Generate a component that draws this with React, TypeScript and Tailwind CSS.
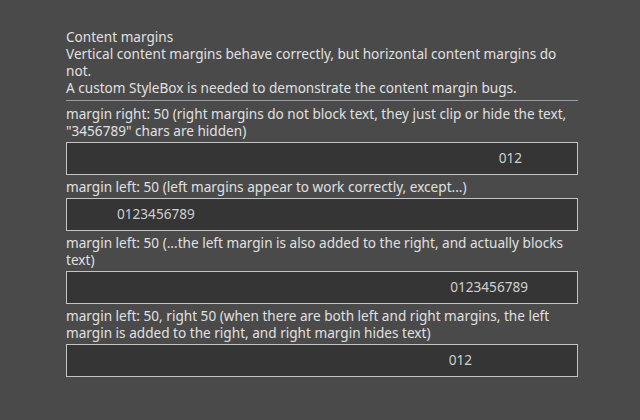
export default function App() {
  const label = "text-[13.6px] leading-[17px] text-[#e0e0e0]";
  const box = "flex h-[33px] items-center border border-[#c4c4c4] bg-[#353535] text-[13.6px] text-[#cfcfcf]";
  return (
    <div
      className="h-[420px] w-[640px] overflow-hidden bg-[#4a4a4a] px-[66px] pt-[28px]"
      style={{ fontFamily: '"Noto Sans", "Open Sans", sans-serif' }}
    >
      <div className="flex w-[512px] flex-col gap-[3px]">
        <div className={label}>
          <p>Content margins</p>
          <p>Vertical content margins behave correctly, but horizontal content margins do not.</p>
          <p>A custom StyleBox is needed to demonstrate the content margin bugs.</p>
        </div>
        <div className="flex h-[3px] items-center">
          <div className="h-px w-full bg-[#9a9ea4]" />
        </div>
        <p className={label}>
          margin right: 50 (right margins do not block text, they just clip or hide the text, "3456789" chars are hidden)
        </p>
        <div className={`${box} justify-end pr-[55px]`}>012</div>
        <p className={label}>margin left: 50 (left margins appear to work correctly, except...)</p>
        <div className={`${box} pl-[50px]`}>0123456789</div>
        <p className={label}>
          margin left: 50 (...the left margin is also added to the right, and actually blocks text)
        </p>
        <div className={`${box} justify-end pr-[49px]`}>0123456789</div>
        <p className={label}>
          margin left: 50, right 50 (when there are both left and right margins, the left margin is added to the right, and right margin hides text)
        </p>
        <div className={`${box} justify-end pr-[105px]`}>012</div>
      </div>
    </div>
  );
}
